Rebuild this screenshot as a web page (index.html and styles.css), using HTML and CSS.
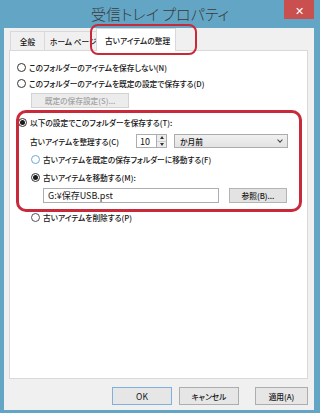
FILE: index.html
```html
<!DOCTYPE html>
<html lang="ja">
<head>
    <meta charset="UTF-8">
    <title>受信トレイ プロパティ</title>
    <link rel="stylesheet" href="styles.css">
</head>
<body>
    <div class="window">
        <div class="titlebar">
            <span class="title">受信トレイ プロパティ</span>
            <span class="close">✕</span>
        </div>
        <div class="client">
            <div class="tabs">
                <span class="tab tab-first">全般</span>
                <span class="tab tab-home">ホーム ページ</span>
                <span class="tab tab-active">古いアイテムの整理</span>
            </div>
            <div class="panel">
                <label class="row row1"><span class="radio"></span>このフォルダーのアイテムを保存しない(N)</label>
                <label class="row row2"><span class="radio"></span>このフォルダーのアイテムを既定の設定で保存する(D)</label>
                <span class="btn btn-disabled">既定の保存設定(S)...</span>
                <label class="row row3"><span class="radio checked"></span>以下の設定でこのフォルダーを保存する(T):</label>
                <div class="row rowc">
                    <span class="label-c">古いアイテムを整理する(C)</span>
                    <span class="spin">
                        <span class="spin-val">10</span>
                        <span class="spin-btns"><span class="up"></span><span class="down"></span></span>
                    </span>
                    <span class="select">か月前<span class="chev"></span></span>
                </div>
                <label class="row rowf"><span class="radio hover"></span>古いアイテムを既定の保存フォルダーに移動する(F)</label>
                <label class="row rowm"><span class="radio checked"></span>古いアイテムを移動する(M):</label>
                <div class="rowinput">
                    <span class="textbox">G:¥保存USB.pst</span>
                    <span class="btn btn-browse">参照(B)...</span>
                </div>
                <label class="row rowp"><span class="radio"></span>古いアイテムを削除する(P)</label>

                <div class="mark mark-group"></div>
            </div>
            <div class="buttons">
                <span class="btn btn-ok">OK</span>
                <span class="btn btn-cancel">キャンセル</span>
                <span class="btn btn-apply">適用(A)</span>
            </div>
            <div class="mark mark-tab"></div>
        </div>
    </div>
</body>
</html>
```
FILE: styles.css
```css
* {
    box-sizing: border-box;
}
body {
    margin: 0;
    width: 320px;
    height: 413px;
    overflow: hidden;
    font-family: "Noto Sans CJK JP", "Noto Sans", sans-serif;
    font-feature-settings: "palt";
    font-size: 7.7px;
    font-weight: 500;
    color: #151515;
}
.window {
    background-color: #62a5c4;
    height: 413px;
    padding: 0 6px 3px 4px;
    display: flex;
    flex-direction: column;
}
.titlebar {
    height: 28px;
    display: flex;
    justify-content: center;
    align-items: center;
    position: relative;
}
.title {
    font-size: 15px;
    font-weight: 300;
    color: #3a3a3a;
    margin-left: 2px;
    margin-bottom: 2px;
}
.close {
    position: absolute;
    right: 0;
    top: 0;
    width: 30px;
    height: 19px;
    background-color: #c9504f;
    color: white;
    font-size: 11px;
    font-weight: 400;
    display: flex;
    justify-content: center;
    align-items: center;
}
.client {
    flex: 1;
    background-color: #f0f0f0;
    position: relative;
    padding: 0 6px 0 5px;
    display: flex;
    flex-direction: column;
}
.tabs {
    display: flex;
    height: 22px;
    align-items: flex-end;
    padding-left: 1px;
}
.tab {
    height: 19px;
    border: 1px solid #d9d9d9;
    border-bottom: none;
    display: flex;
    align-items: center;
    padding: 0 5px;
    white-space: nowrap;
    overflow: hidden;
    flex-shrink: 0;
}
.tab-first {
    width: 35px;
    justify-content: center;
}
.tab-home {
    width: 53px;
    border-left: none;
    padding-left: 5px;
}
.tab-active {
    height: 23px;
    width: 80px;
    background-color: white;
    margin-left: -2px;
    margin-bottom: -1px;
    padding-left: 8px;
    position: relative;
    z-index: 1;
}
.panel {
    height: 329px;
    background-color: white;
    border: 1px solid #d9d9d9;
    padding-top: 8px;
    position: relative;
    display: flex;
    flex-direction: column;
    align-items: flex-start;
}
.row {
    height: 16px;
    display: flex;
    align-items: center;
    white-space: nowrap;
}
.row1,
.row2 {
    margin-left: 7px;
}
.radio {
    width: 9px;
    height: 9px;
    border: 1px solid #333;
    border-radius: 50%;
    background: white;
    margin-right: 3px;
    position: relative;
    flex-shrink: 0;
}
.radio.checked::after {
    content: "";
    position: absolute;
    left: 1px;
    top: 1px;
    width: 5px;
    height: 5px;
    border-radius: 50%;
    background: #1a1a1a;
}
.radio.hover {
    border-color: #6aa7df;
}
.btn {
    display: flex;
    justify-content: center;
    align-items: center;
    background-color: #e3e3e3;
    border: 1px solid #b4b4b4;
    white-space: nowrap;
    flex-shrink: 0;
}
.btn-disabled {
    margin: 2px 0 0 21px;
    width: 98px;
    height: 15px;
    color: #a2a2a2;
    border-color: #d2d2d2;
    background-color: #ececec;
}
.row3 {
    margin: 6px 0 0 8px;
}
.rowc {
    margin: 4px 0 0 20px;
    height: 14px;
}
.label-c {
    width: 106px;
}
.spin {
    display: flex;
    height: 14px;
}
.spin-val {
    width: 21px;
    border: 1px solid #abadb3;
    display: flex;
    align-items: center;
    padding-left: 3px;
    font-size: 9px;
    font-weight: 400;
}
.spin-btns {
    width: 10px;
    display: flex;
    flex-direction: column;
    border: 1px solid #abadb3;
    border-left: none;
}
.spin-btns span {
    flex: 1;
    display: flex;
    justify-content: center;
    align-items: center;
    background: #ececec;
}
.spin-btns .up::before {
    content: "";
    border-left: 2px solid transparent;
    border-right: 2px solid transparent;
    border-bottom: 3px solid #333;
}
.spin-btns .down::before {
    content: "";
    border-left: 2px solid transparent;
    border-right: 2px solid transparent;
    border-top: 3px solid #333;
}
.up {
    border-bottom: 1px solid #cfcfcf;
}
.select {
    margin-left: 7px;
    width: 114px;
    height: 14px;
    border: 1px solid #acacac;
    background: linear-gradient(#f0f0f0, #e3e3e3);
    display: flex;
    align-items: center;
    padding-left: 5px;
    position: relative;
}
.chev {
    position: absolute;
    right: 5px;
    top: 3px;
    width: 4px;
    height: 4px;
    border-right: 1px solid #444;
    border-bottom: 1px solid #444;
    transform: rotate(45deg);
}
.rowf {
    margin: 3px 0 0 21px;
}
.rowm {
    margin: 2px 0 0 21px;
}
.rowinput {
    margin: 3px 0 0 33px;
    display: flex;
    gap: 10px;
}
.textbox {
    width: 176px;
    height: 15px;
    border: 1px solid #abadb3;
    display: flex;
    align-items: center;
    padding-left: 4px;
    font-size: 9px;
    font-weight: 400;
}
.btn-browse {
    width: 58px;
    height: 15px;
}
.rowp {
    margin: 6px 0 0 21px;
}
.rowp .radio {
    border-color: #555;
}
.buttons {
    display: flex;
    justify-content: flex-end;
    margin-top: 8px;
}
.buttons .btn {
    height: 18px;
    background-color: #e6e6e6;
    border-color: #adadad;
}
.buttons .btn-ok {
    width: 60px;
    border-color: #7fb0de;
    font-weight: 400;
    font-size: 8.5px;
}
.btn-cancel {
    width: 60px;
    margin-left: 7px;
}
.btn-apply {
    width: 53px;
    margin-left: 16px;
}
.mark {
    position: absolute;
    border: 2px solid #c92a3a;
    z-index: 2;
}
.mark-tab {
    left: 86px;
    top: -4px;
    width: 107px;
    height: 31px;
    border-radius: 8px;
}
.mark-group {
    left: 6px;
    top: 59px;
    width: 286px;
    height: 102px;
    border-width: 3px;
    border-radius: 10px;
}
```
